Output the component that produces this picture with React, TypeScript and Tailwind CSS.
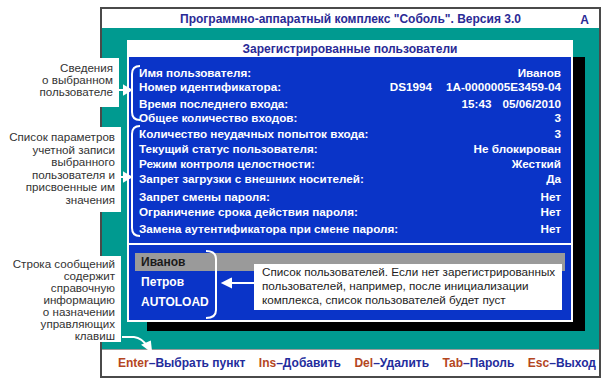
import React from "react";

const rows: { label: string; value: React.ReactNode; h: number }[] = [
  { label: "Имя пользователя:", value: "Иванов", h: 14 },
  {
    label: "Номер идентификатора:",
    value: (
      <span className="flex gap-[14px]">
        <span>DS1994</span>
        <span>1A-0000005E3459-04</span>
      </span>
    ),
    h: 17,
  },
  {
    label: "Время последнего входа:",
    value: (
      <span className="flex gap-[11px]">
        <span>15:43</span>
        <span>05/06/2010</span>
      </span>
    ),
    h: 14,
  },
  { label: "Общее количество входов:", value: "3", h: 16 },
  { label: "Количество неудачных попыток входа:", value: "3", h: 15 },
  { label: "Текущий статус пользователя:", value: "Не блокирован", h: 15 },
  { label: "Режим контроля целостности:", value: "Жесткий", h: 15 },
  { label: "Запрет загрузки с внешних носителей:", value: "Да", h: 18 },
  { label: "Запрет смены пароля:", value: "Нет", h: 15 },
  { label: "Ограничение срока действия пароля:", value: "Нет", h: 17 },
  { label: "Замена аутентификатора при смене пароля:", value: "Нет", h: 14 },
];

const keys: [string, string][] = [
  ["Enter", "Выбрать пункт"],
  ["Ins", "Добавить"],
  ["Del", "Удалить"],
  ["Tab", "Пароль"],
  ["Esc", "Выход"],
];

export default function App() {
  return (
    <div className="relative w-[610px] h-[380px] bg-white overflow-hidden font-['Liberation_Sans',Arial,sans-serif]">
      {/* Screen frame */}
      <div className="ml-[100px] mt-[7px] w-[501px] h-[371px] border-2 border-[#4a4a4a] flex flex-col">
        <div className="relative h-[19px] flex items-center justify-center text-[12px] font-bold text-[#2a2a96]">
          <span>Программно-аппаратный комплекс "Соболь". Версия 3.0</span>
          <span className="absolute right-[10px] top-[2px]">A</span>
        </div>
        <div className="flex-1 bg-[#009a90] pl-[25px] pt-[12px]">
          <div className="w-[446px] h-[282px] flex flex-col shadow-[16px_13px_0_-4px_#000]">
            <div className="h-[17px] bg-white flex items-center justify-center text-[12px] font-bold text-[#2a2a96]">
              Зарегистрированные пользователи
            </div>
            <div className="flex-1 bg-[#0a34c8] border-2 border-t-0 border-white flex flex-col text-white font-bold text-[11.7px]">
              <div className="h-[186px] pt-[9px] px-[10px]">
                {rows.map((r, i) => (
                  <div key={i} className="flex justify-between leading-[14px] whitespace-nowrap" style={{ height: r.h }}>
                    <span>{r.label}</span>
                    <span>{r.value}</span>
                  </div>
                ))}
              </div>
              <div className="h-[2px] bg-white" />
              <div className="pt-[8px] px-[6px] flex flex-col gap-[2px] text-[12px]">
                <div className="h-[18px] bg-[#9a9a9a] text-[#1a1a1a] flex items-center pl-[6px]">Иванов</div>
                <div className="h-[18px] flex items-center pl-[6px]">Петров</div>
                <div className="h-[18px] flex items-center pl-[6px]">AUTOLOAD</div>
              </div>
            </div>
          </div>
        </div>
        <div className="h-[27px] border-t border-[#9a9a9a] flex items-center justify-between pl-[16px] pr-[3px] text-[12px] font-bold">
          {keys.map(([k, v]) => (
            <span key={k}>
              <span className="text-[#b4461e]">{k}</span>
              <span className="text-[#232c9c]">–{v}</span>
            </span>
          ))}
        </div>
      </div>

      {/* Annotation labels */}
      <div className="absolute left-0 top-[58px] w-[119px] h-[49px] bg-white text-right pr-[6px] pt-[4px] text-[11.6px] leading-[12px] text-[#333]">
        Сведения
        <br />о выбранном
        <br />
        пользователе
      </div>
      <div className="absolute left-0 top-[127px] w-[121px] h-[85px] bg-white text-right pr-[6px] pt-[4px] text-[11.6px] leading-[12.5px] text-[#333]">
        Список параметров
        <br />
        учетной записи
        <br />
        выбранного
        <br />
        пользователя и
        <br />
        присвоенные им
        <br />
        значения
      </div>
      <div className="absolute left-0 top-[256px] w-[121px] h-[86px] bg-white text-right pr-[6px] pt-[2px] text-[11.6px] leading-[12px] text-[#333]">
        Строка сообщений
        <br />
        содержит
        <br />
        справочную
        <br />
        информацию
        <br />о назначении
        <br />
        управляющих
        <br />
        клавиш
      </div>

      {/* Callout */}
      <div className="absolute left-[254px] top-[264px] w-[308px] h-[46px] bg-white pl-[8px] pt-[1px] text-[11.7px] leading-[14px] text-[#222] whitespace-nowrap">
        Список пользователей. Если нет зарегистрированных
        <br />
        пользователей, например, после инициализации
        <br />
        комплекса, список пользователей будет пуст
      </div>

      {/* Braces and arrows */}
      <svg className="absolute left-0 top-0" width="610" height="380" fill="none" stroke="white" strokeWidth="2">
        {/* brace 1 */}
        <path d="M140 66 Q132 66 132 74 L132 112 Q132 120 140 120" />
        <path d="M119 90 L126 90" />
        <path d="M124 86 L131 90 L124 94 Z" fill="white" />
        {/* brace 2 */}
        <path d="M140 126 Q132 126 132 134 L132 228 Q132 236 140 236" />
        <path d="M121 177 L126 177" />
        <path d="M124 173 L131 177 L124 181 Z" fill="white" />
        {/* brace 3 */}
        <path d="M206 251 Q216 251 216 259 L216 310 Q216 318 206 318" />
        <path d="M254 283 L230 283" />
        <path d="M231 279 L223 283 L231 287 Z" fill="white" />
        {/* arrow to status bar */}
        <path d="M122 337 L134 337 Q142 338 148 347" />
        <path d="M143 345 L151 351 L150 342 Z" fill="white" />
      </svg>
    </div>
  );
}
